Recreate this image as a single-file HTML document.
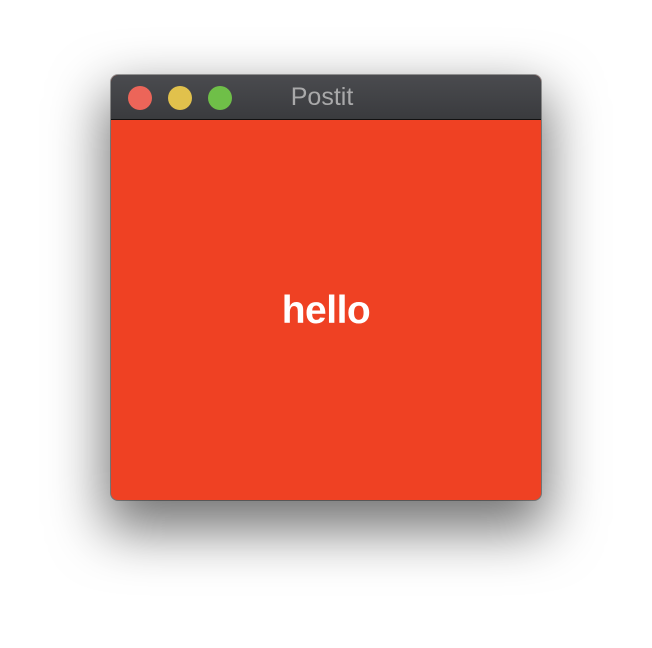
<!DOCTYPE html>
<html><head><style>
html,body{margin:0;padding:0;background:#fff;width:652px;height:648px;overflow:hidden}
.win{position:absolute;left:111px;top:75px;width:430px;height:425px;border-radius:7px;background:#ef4123;box-shadow:0 24px 55px 6px rgba(0,0,0,.55),0 0 0 1px rgba(0,0,0,.35);overflow:hidden}
.tb{position:absolute;left:0;top:0;width:100%;height:44px;background:linear-gradient(#4a4b4f,#3a3b3e);border-bottom:1px solid #111}
.c{position:absolute;top:11px;width:24px;height:24px;border-radius:50%}
.t{position:absolute;left:-4px;width:100%;top:8px;text-align:center;font:25px "Liberation Sans",sans-serif;color:#a9a9aa}
.h{position:absolute;left:0;width:100%;top:214px;text-align:center;font:bold 39px "Liberation Sans",sans-serif;color:#fff;letter-spacing:-0.5px}
</style></head><body>
<div class="win">
<div class="tb">
<div class="c" style="left:17px;background:#ec6559"></div>
<div class="c" style="left:57px;background:#e1c14c"></div>
<div class="c" style="left:97px;background:#6fbf48"></div>
<div class="t">Postit</div>
</div>
<div class="h">hello</div>
</div>
</body></html>
